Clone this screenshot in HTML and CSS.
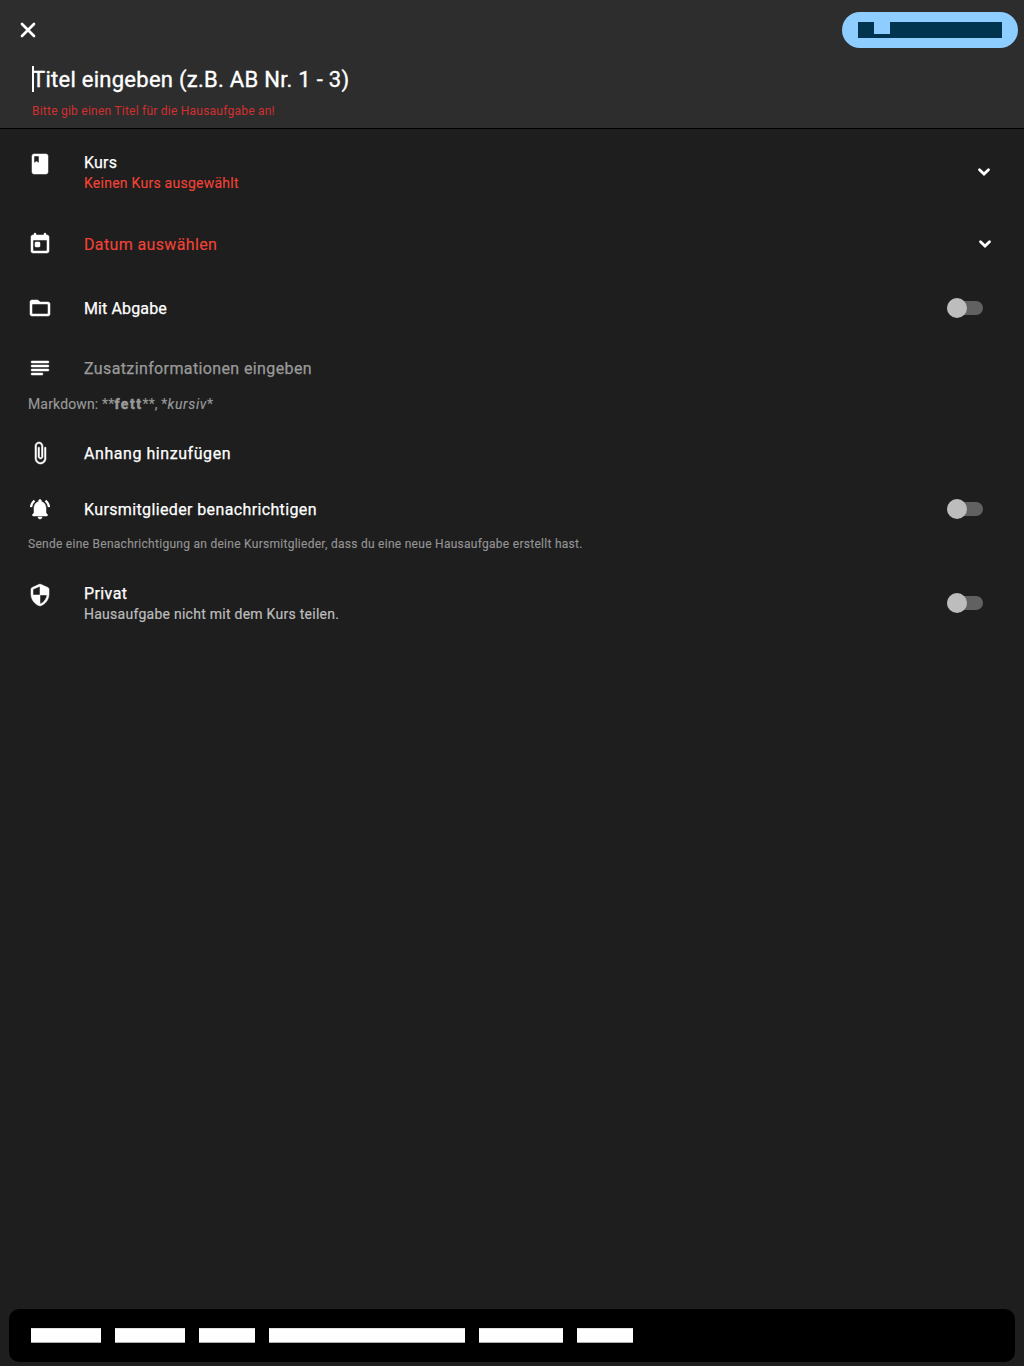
FILE: index.html
```html
<!DOCTYPE html>
<html lang="de">
<head>
<meta charset="utf-8">
<title>Hausaufgabe</title>
<link rel="stylesheet" href="styles.css">
</head>
<body>
<header class="header">
  <div class="toolbar">
    <svg class="close" viewBox="0 0 24 24"><path d="M6 6L18 18M18 6L6 18"/></svg>
    <div class="save"><svg class="save-label" viewBox="0 0 144 16"><path d="M0 0H16V12H32V0H144V16H0Z"/></svg></div>
  </div>
  <div class="title"><i class="caret"></i><span class="title-text">Titel eingeben (z.B. AB Nr. 1 - 3)</span></div>
  <div class="error"><span class="error-text">Bitte gib einen Titel für die Hausaufgabe an!</span></div>
</header>
<main class="list">
  <section class="row row-course">
    <svg class="icon" viewBox="0 0 24 24"><path d="M18 2H6C4.900 2 4 2.900 4 4v16c0 1.100.900 2 2 2h12c1.100 0 2-.900 2-2V4c0-1.100-.900-2-2-2zM6 4h5v7l-2.500-1.500L6 11z"/></svg>
    <div class="body"><span class="label l-kurs">Kurs</span><span class="sub red l-keinen">Keinen Kurs ausgewählt</span></div>
    <svg class="chevron" viewBox="0 0 24 24"><path d="M7.500 9.700L12 14L16.500 9.700"/></svg>
  </section>
  <section class="row row-date">
    <svg class="icon" viewBox="0 0 24 24"><path d="M19 3h-1V2c0-.550-.450-1-1-1s-1 .450-1 1v1H8V2c0-.550-.450-1-1-1s-1 .450-1 1v1H5c-1.110 0-2 .900-2 2v14c0 1.100.890 2 2 2h14c1.100 0 2-.900 2-2V5c0-1.100-.900-2-2-2zm-1 16H6c-.550 0-1-.450-1-1V8h14v10c0 .550-.450 1-1 1zM8 10h3c.550 0 1 .450 1 1v3c0 .550-.450 1-1 1H8c-.550 0-1-.450-1-1v-3c0-.550.450-1 1-1z"/></svg>
    <div class="body"><span class="label red l-datum">Datum auswählen</span></div>
    <svg class="chevron" viewBox="0 0 24 24"><path d="M7.500 9.700L12 14L16.500 9.700"/></svg>
  </section>
  <section class="row row-submit">
    <svg class="icon" viewBox="0 0 24 24"><path d="M20 6h-8l-1.410-1.410C10.210 4.210 9.700 4 9.170 4H4c-1.100 0-1.990.900-1.990 2L2 18c0 1.100.900 2 2 2h16c1.100 0 2-.900 2-2V8c0-1.100-.900-2-2-2zm-1 12H5c-.550 0-1-.450-1-1V9c0-.550.450-1 1-1h14c.550 0 1 .450 1 1v8c0 .550-.450 1-1 1z"/></svg>
    <div class="body"><span class="label l-abgabe">Mit Abgabe</span></div>
    <div class="switch"><i class="thumb"></i></div>
  </section>
  <section class="row row-info">
    <svg class="icon" viewBox="0 0 24 24"><path d="M4 5h16a1 1 0 0 1 0 2H4a1 1 0 0 1 0-2zm0 4h16a1 1 0 0 1 0 2H4a1 1 0 0 1 0-2zm0 4h16a1 1 0 0 1 0 2H4a1 1 0 0 1 0-2zm0 4h10a1 1 0 0 1 0 2H4a1 1 0 0 1 0-2z"/></svg>
    <div class="body"><span class="label muted l-zusatz">Zusatzinformationen eingeben</span></div>
  </section>
  <p class="hint markdown"><span class="l-markdown">Markdown: **<b>fett</b>**, *<em>kursiv</em>*</span></p>
  <section class="row row-attach">
    <svg class="icon" viewBox="0 0 24 24"><path d="M16.500 6.750v10.580c0 2.090-1.530 3.950-3.610 4.150-2.390.230-4.390-1.640-4.390-3.980V5.140c0-1.310.940-2.500 2.240-2.630 1.500-.150 2.760 1.020 2.760 2.490v10.500c0 .550-.450 1-1 1s-1-.450-1-1V6.750c0-.410-.340-.750-.750-.750s-.750.340-.750.750v8.610c0 1.310.940 2.500 2.240 2.630 1.500.150 2.760-1.020 2.760-2.490V5.170c0-2.090-1.530-3.950-3.610-4.150C9.010.790 7 2.660 7 5v12.270c0 2.870 2.100 5.440 4.960 5.710 3.290.300 6.040-2.260 6.040-5.480V6.750c0-.410-.340-.750-.750-.750s-.750.340-.750.750z"/></svg>
    <div class="body"><span class="label l-anhang">Anhang hinzufügen</span></div>
  </section>
  <section class="row row-notify">
    <svg class="icon" viewBox="0 0 24 24"><path d="M12 22c1.100 0 2-.900 2-2h-4c0 1.100.900 2 2 2zm6-6v-5c0-3.070-1.630-5.640-4.500-6.320V4c0-.830-.670-1.500-1.500-1.500s-1.500.670-1.500 1.500v.680C7.640 5.360 6 7.920 6 11v5l-1.300 1.300c-.630.630-.190 1.700.700 1.700h13.170c.890 0 1.340-1.080.710-1.710L18 16z"/><path class="ring" d="M3 10.200C3.300 7.500 4.500 5.300 6.500 3.700M21 10.200C20.700 7.500 19.500 5.300 17.500 3.700"/></svg>
    <div class="body"><span class="label l-notify">Kursmitglieder benachrichtigen</span></div>
    <div class="switch"><i class="thumb"></i></div>
  </section>
  <p class="hint notify-hint"><span class="l-sende">Sende eine Benachrichtigung an deine Kursmitglieder, dass du eine neue Hausaufgabe erstellt hast.</span></p>
  <section class="row row-private">
    <svg class="icon" viewBox="0 0 24 24"><path d="M11.190 1.360l-7 3.110C3.470 4.790 3 5.510 3 6.300V11c0 5.550 3.840 10.740 9 12 5.160-1.260 9-6.450 9-12V6.300c0-.790-.470-1.510-1.190-1.830l-7-3.110c-.510-.230-1.110-.230-1.620 0zM12 11.990h7c-.530 4.120-3.280 7.790-7 8.940V12H5V6.300l7-3.110v8.800z"/></svg>
    <div class="body"><span class="label l-privat">Privat</span><span class="sub soft l-haus">Hausaufgabe nicht mit dem Kurs teilen.</span></div>
    <div class="switch"><i class="thumb"></i></div>
  </section>
</main>
<footer class="snackbar">
  <i class="block w5"></i><i class="block w5"></i><i class="block w4"></i><i class="block w14"></i><i class="block w6"></i><i class="block w4"></i>
</footer>
</body>
</html>
```
FILE: styles.css
```css
* { box-sizing: border-box; }
body {
  margin: 0;
  height: 1366px;
  display: flex;
  flex-direction: column;
  background: #1e1e1e;
  color: #fff;
  font-family: Roboto, "Noto Sans", sans-serif;
  font-size: 16px;
  white-space: nowrap;
  overflow: hidden;
}
svg, i { display: block; flex: none; }
.header { height: 129px; background: #2d2d2d; border-bottom: 1px solid #000; }
.toolbar { display: flex; justify-content: space-between; align-items: center; height: 60px; padding: 0 6px 0 16px; }
.close { width: 24px; height: 24px; fill: none; stroke: #fff; stroke-width: 2.7; stroke-linecap: round; }
.save { width: 176px; height: 36px; padding: 10px 16px; border-radius: 18px; background: #8ecdff; }
.save-label { width: 144px; height: 16px; fill: #00344f; }
.title { display: flex; align-items: center; height: 38px; padding-left: 32px; font-size: 22px; position: relative; }
.caret { position: absolute; left: 32px; top: 6px; width: 2px; height: 26px; background: #fff; }
.error { height: 26px; line-height: 26px; padding-left: 32px; color: #d32f2f; font-size: 12px; }
.list { flex: 1; padding-top: 7px; }
.row { display: flex; align-items: center; height: 56px; padding: 0 28px; }
.icon { width: 24px; height: 24px; fill: #fff; stroke: #fff; stroke-width: .5; }
.body { flex: 1; display: flex; flex-direction: column; align-items: flex-start; padding-left: 32px; }
.row-course .body, .row-private .body { padding-bottom: 2px; }
.label { line-height: 22px; padding-top: 2px; -webkit-text-stroke: .25px currentColor; }
.sub { font-size: 14px; line-height: 18px; -webkit-text-stroke: .2px currentColor; }
.title-text { -webkit-text-stroke: .35px currentColor; letter-spacing: .27px; }
.error-text { letter-spacing: .235px; }
.red { color: #f44336; -webkit-text-stroke-width: .1px; }
.muted { color: #9a9a9a; }
.soft { color: #bcbcbc; }
.l-kurs { letter-spacing: .2px; }
.l-keinen { letter-spacing: .25px; }
.l-datum { letter-spacing: .36px; }
.l-abgabe { letter-spacing: .12px; }
.l-zusatz { letter-spacing: .38px; }
.l-markdown { letter-spacing: .15px; -webkit-text-stroke: .15px currentColor; }
.l-anhang { letter-spacing: .56px; }
.l-notify { letter-spacing: .37px; }
.l-sende { letter-spacing: .275px; -webkit-text-stroke: .15px currentColor; }
.l-privat { letter-spacing: .4px; }
.l-haus { letter-spacing: .26px; }
.chevron { width: 24px; height: 24px; fill: none; stroke: #fff; stroke-width: 2.8; stroke-linecap: round; }
.row-course { height: 72px; }
.row-private { height: 74px; margin-top: 3px; }
.row-course .icon { align-self: flex-start; margin-top: 16px; }
.row-private .icon { align-self: flex-start; margin-top: 17px; }
.row-date { margin-top: 8px; padding-right: 27px; }
.row-submit { margin-top: 8px; }
.row-info { height: 48px; margin-top: 8px; }
.switch { width: 36px; height: 14px; border-radius: 7px; background: #616161; margin-right: 13px; display: flex; align-items: center; }
.thumb { width: 20px; height: 20px; border-radius: 50%; background: #bdbdbd; }
.hint { margin: 0; padding-left: 28px; color: #999; }
.markdown { height: 33px; line-height: 24px; font-size: 14px; }
.markdown b { font-weight: 800; letter-spacing: 1.5px; -webkit-text-stroke-width: .4px; }
.markdown em { letter-spacing: .6px; }
.notify-hint { height: 26px; line-height: 14px; font-size: 12px; color: #939393; }
.icon .ring { fill: none; stroke: #fff; stroke-width: 2.2; stroke-linecap: butt; }
.snackbar { display: flex; align-items: center; gap: 14px; height: 53px; margin: 0 9px 4px; padding-left: 22px; border-radius: 10px; background: #000; }
.block { height: 15px; background: #fff; border-top: 1px solid #e0e0e0; border-bottom: 1px solid #b0b0b0; }
.w4 { width: 56px; }
.w5 { width: 70px; }
.w6 { width: 84px; }
.w14 { width: 196px; }
```
